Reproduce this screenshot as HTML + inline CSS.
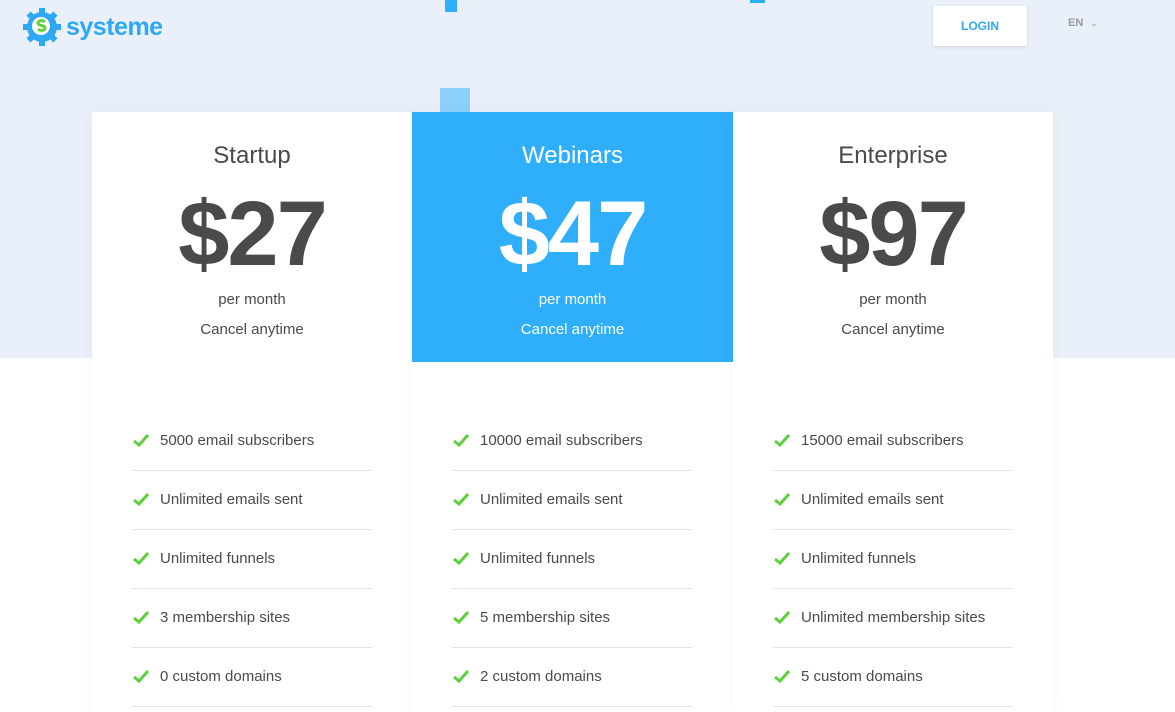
<!DOCTYPE html>
<html><head><style>
*{margin:0;padding:0;box-sizing:border-box}
body{width:1175px;height:707px;overflow:hidden;background:#fff;font-family:"Liberation Sans",sans-serif;position:relative}
.bg{position:absolute;left:0;top:0;width:1175px;height:358px;background:#eaf0f9}
.logo{position:absolute;left:22px;top:7px;display:flex;align-items:center}
.logo span{color:#2ea8f5;font-weight:bold;font-size:25px;margin-left:4px;letter-spacing:-0.5px}
.login{position:absolute;left:933px;top:6px;width:94px;height:40px;background:#fff;border-radius:3px;box-shadow:0 1px 3px rgba(0,0,0,.12);color:#2ea8f5;font-weight:bold;font-size:12px;text-align:center;line-height:40px}
.en{position:absolute;left:1068px;top:17px;font-size:11px;font-weight:bold;color:#999}
.en i{font-style:normal;font-weight:normal;margin-left:7px;font-size:9px}
.sq{position:absolute;background:#2eaefb}
.card{position:absolute;top:112px;height:600px;background:#fff;text-align:center;color:#4a4a4a;box-shadow:0 0 12px rgba(60,90,130,.05)}
.head{height:250px;padding-top:30px}
.card h2{font-weight:normal;font-size:24px;line-height:28px}
.price{font-size:92px;font-weight:bold;line-height:100px;margin-top:14px;letter-spacing:-2px}
.pm{font-size:15px;margin-top:8px;line-height:16px}
.ca{font-size:15px;margin-top:14px;line-height:16px}
.blue .head{background:#2eaefb;color:#fff}
ul{list-style:none;position:absolute;left:40px;top:300px;width:240px;text-align:left}
li{height:59px;border-bottom:1px solid #dfe5ec;font-size:15px;line-height:58px;padding-left:28px;position:relative;color:#4a4a4a}
li svg{position:absolute;left:1px;top:22px}
</style></head><body>
<div class="bg"></div>
<div class="sq" style="left:445px;top:0;width:12px;height:12px"></div>
<div class="sq" style="left:750px;top:0;width:15px;height:3px"></div>
<div class="sq" style="left:440px;top:88px;width:30px;height:24px;opacity:.5"></div>
<div class="logo">
<svg width="40" height="40" viewBox="0 0 40 40"><g fill="#2ea8f5"><circle cx="20" cy="20" r="15"/>
<g><rect x="17" y="1" width="6" height="8"/><rect x="17" y="31" width="6" height="8"/><rect x="1" y="17" width="8" height="6"/><rect x="31" y="17" width="8" height="6"/></g>
<g transform="rotate(45 20 20)"><rect x="17" y="1" width="6" height="8"/><rect x="17" y="31" width="6" height="8"/><rect x="1" y="17" width="8" height="6"/><rect x="31" y="17" width="8" height="6"/></g></g>
<circle cx="19" cy="19" r="9" fill="#fff"/><path d="M23 15c-2-2-7-2-7 1s7 2 7 5-5 3-7 1" stroke="#5fd13a" stroke-width="3" fill="none"/></svg>
<span>systeme</span></div>
<div class="login">LOGIN</div>
<div class="en">EN<i>⌄</i></div>

<div class="card" style="left:92px;width:320px"><div class="head"><h2>Startup</h2><div class="price">$27</div><div class="pm">per month</div><div class="ca">Cancel anytime</div></div>
<ul><li><svg width="16" height="13"><path d="M1 7l5 4 9-10" stroke="#5bd03c" stroke-width="3" fill="none"/></svg>5000 email subscribers</li><li><svg width="16" height="13"><path d="M1 7l5 4 9-10" stroke="#5bd03c" stroke-width="3" fill="none"/></svg>Unlimited emails sent</li><li><svg width="16" height="13"><path d="M1 7l5 4 9-10" stroke="#5bd03c" stroke-width="3" fill="none"/></svg>Unlimited funnels</li><li><svg width="16" height="13"><path d="M1 7l5 4 9-10" stroke="#5bd03c" stroke-width="3" fill="none"/></svg>3 membership sites</li><li><svg width="16" height="13"><path d="M1 7l5 4 9-10" stroke="#5bd03c" stroke-width="3" fill="none"/></svg>0 custom domains</li></ul></div>

<div class="card blue" style="left:412px;width:321px"><div class="head"><h2>Webinars</h2><div class="price">$47</div><div class="pm">per month</div><div class="ca">Cancel anytime</div></div>
<ul><li><svg width="16" height="13"><path d="M1 7l5 4 9-10" stroke="#5bd03c" stroke-width="3" fill="none"/></svg>10000 email subscribers</li><li><svg width="16" height="13"><path d="M1 7l5 4 9-10" stroke="#5bd03c" stroke-width="3" fill="none"/></svg>Unlimited emails sent</li><li><svg width="16" height="13"><path d="M1 7l5 4 9-10" stroke="#5bd03c" stroke-width="3" fill="none"/></svg>Unlimited funnels</li><li><svg width="16" height="13"><path d="M1 7l5 4 9-10" stroke="#5bd03c" stroke-width="3" fill="none"/></svg>5 membership sites</li><li><svg width="16" height="13"><path d="M1 7l5 4 9-10" stroke="#5bd03c" stroke-width="3" fill="none"/></svg>2 custom domains</li></ul></div>

<div class="card" style="left:733px;width:320px"><div class="head"><h2>Enterprise</h2><div class="price">$97</div><div class="pm">per month</div><div class="ca">Cancel anytime</div></div>
<ul><li><svg width="16" height="13"><path d="M1 7l5 4 9-10" stroke="#5bd03c" stroke-width="3" fill="none"/></svg>15000 email subscribers</li><li><svg width="16" height="13"><path d="M1 7l5 4 9-10" stroke="#5bd03c" stroke-width="3" fill="none"/></svg>Unlimited emails sent</li><li><svg width="16" height="13"><path d="M1 7l5 4 9-10" stroke="#5bd03c" stroke-width="3" fill="none"/></svg>Unlimited funnels</li><li><svg width="16" height="13"><path d="M1 7l5 4 9-10" stroke="#5bd03c" stroke-width="3" fill="none"/></svg>Unlimited membership sites</li><li><svg width="16" height="13"><path d="M1 7l5 4 9-10" stroke="#5bd03c" stroke-width="3" fill="none"/></svg>5 custom domains</li></ul></div>
</body></html>
